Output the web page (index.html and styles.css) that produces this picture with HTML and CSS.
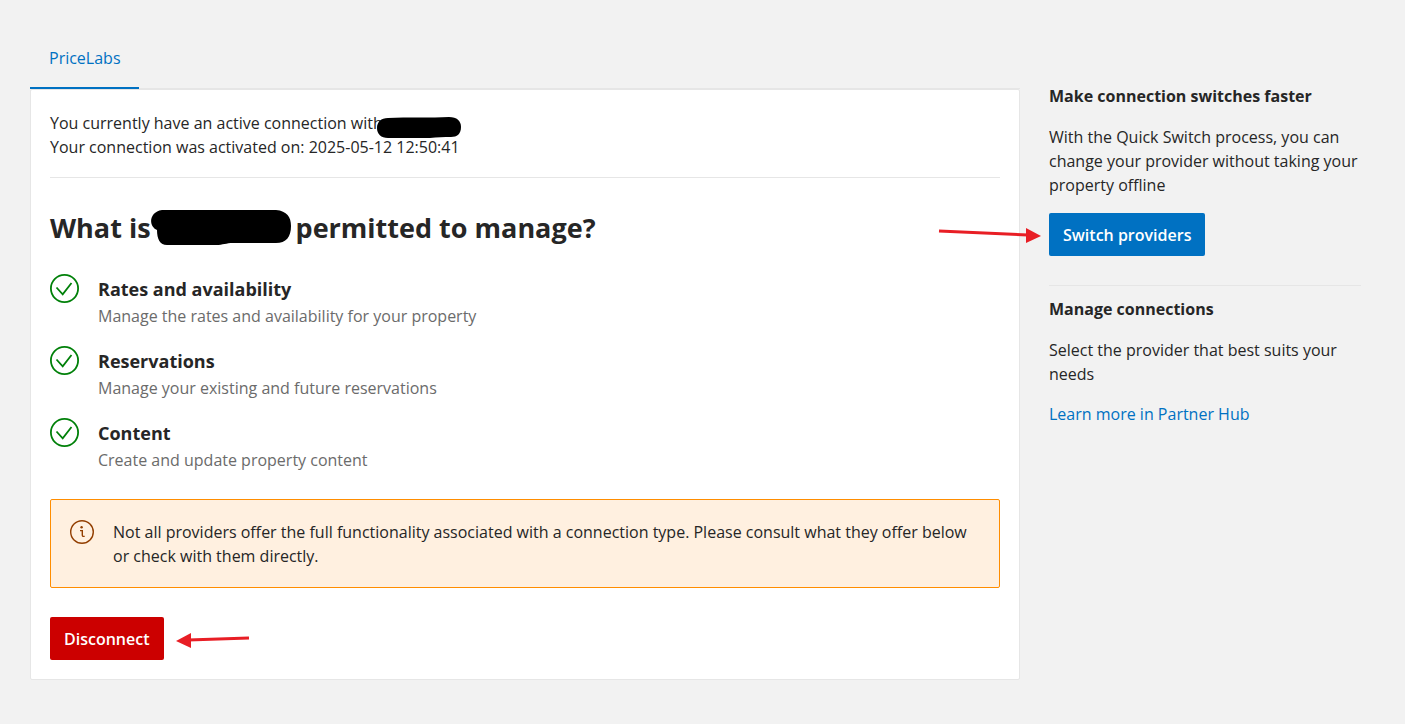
FILE: index.html
```html
<!DOCTYPE html>
<html lang="en">
<head>
<meta charset="utf-8">
<title>Connectivity provider</title>
<link rel="stylesheet" href="styles.css">
</head>
<body>
<div class="page">
  <main class="main">
    <nav class="tabs"><a class="tab" href="#">PriceLabs</a></nav>
    <section class="card">
      <div class="status">
        <p>You currently have an active connection with <svg class="redact-small" viewBox="0 0 84 22" aria-hidden="true"><path d="M11 1C30 0 55 1 72 0C80 0 84 4 84 10C84 17 80 20 74 20C67 20 60 20 53 21L11 21C4 21 0 17 0 11C0 5 4 1 11 1Z"/></svg></p>
        <p>Your connection was activated on: 2025-05-12 12:50:41</p>
      </div>
      <h1 class="title">What is <svg class="redact-large" viewBox="0 0 141 36" aria-hidden="true"><path d="M11 0H125C136 1 140 7 140 16C140 27 135 33 125 33H82C75 33 72 35 65 35H16C9 35 6 29 6 20C-3 16-2 2 11 0Z"/></svg> permitted to manage?</h1>
      <ul class="permissions">
        <li class="permission"><svg class="check" viewBox="0 0 29 29" aria-hidden="true"><circle cx="14.5" cy="14.5" r="13.6"/><path d="M6.5 13.5l6.2 6.8L21.5 9"/></svg><div><h2>Rates and availability</h2><p>Manage the rates and availability for your property</p></div></li>
        <li class="permission"><svg class="check" viewBox="0 0 29 29" aria-hidden="true"><circle cx="14.5" cy="14.5" r="13.6"/><path d="M6.5 13.5l6.2 6.8L21.5 9"/></svg><div><h2>Reservations</h2><p>Manage your existing and future reservations</p></div></li>
        <li class="permission"><svg class="check" viewBox="0 0 29 29" aria-hidden="true"><circle cx="14.5" cy="14.5" r="13.6"/><path d="M6.5 13.5l6.2 6.8L21.5 9"/></svg><div><h2>Content</h2><p>Create and update property content</p></div></li>
      </ul>
      <div class="notice">
        <svg class="info" viewBox="0 0 24 24" aria-hidden="true"><circle cx="12" cy="12" r="11.3"/><path d="M10 10.6h2.3v4.6q0 1.2 1.2 1.2h1.2"/><circle class="dot" cx="11.6" cy="7.2" r="1.2"/></svg>
        <p>Not all providers offer the full functionality associated with a connection type. Please consult what they offer below or check with them directly.</p>
      </div>
      <div class="actions">
        <button class="button danger" type="button">Disconnect</button>
        <svg class="arrow-left" viewBox="0 0 74 18" aria-hidden="true"><path class="shaft" d="M73 8L12 10"/><path class="head" d="M0 11L15 3V18Z"/></svg>
      </div>
    </section>
  </main>
  <aside class="side">
    <section class="block">
      <h2>Make connection switches faster</h2>
      <p>With the Quick Switch process, you can change your provider without taking your property offline</p>
      <div class="switch"><button class="button primary" type="button">Switch providers</button>
        <svg class="arrow-right" viewBox="0 0 104 16" aria-hidden="true"><path class="shaft" d="M1 3L90 7"/><path class="head" d="M103 8L88 0V15Z"/></svg></div>
    </section>
    <section class="block">
      <h2>Manage connections</h2>
      <p>Select the provider that best suits your needs</p>
      <a href="#">Learn more in Partner Hub</a>
    </section>
  </aside>
</div>
</body>
</html>
```

FILE: styles.css
```css
* { box-sizing: border-box; }
body { margin: 0; background: #f2f2f2; color: #262626; font: 16px/24px "Open Sans", "Noto Sans", sans-serif; }
h1, h2, p, ul { margin: 0; padding: 0; }
a { color: #0071c2; text-decoration: none; }
.page { display: flex; gap: 29px; padding: 28px 44px 44px 30px; }
.main { flex: 1; min-width: 0; }
.tabs { display: flex; box-shadow: inset 0 -1px #e6e6e6; }
.tab { padding: 18px 18px 17px 19px; border-bottom: 2px solid #0071c2; }
.card { padding: 21px 19px 19px; background: #fff; border: 1px solid #e6e6e6; border-radius: 2px; }
.status { padding-bottom: 18px; border-bottom: 1px solid #e6e6e6; }
.status p { position: relative; }
.redact-small { position: absolute; top: 6px; width: 84px; height: 22px; margin-left: -6px; }
.title { display: flex; align-items: center; margin-top: 32px; font-size: 27px; line-height: 36px; white-space: nowrap; }
.redact-large { width: 141px; height: 36px; margin-right: 4px; }
.permissions { display: grid; gap: 18px; margin-top: 28px; list-style: none; }
.permission { display: flex; gap: 19px; }
.permission h2 { font-size: 18px; line-height: 30px; }
.permission p { line-height: 24px; color: #6b6b6b; }
.check { flex: none; width: 29px; height: 29px; fill: none; stroke: #008009; stroke-width: 1.8; }
.notice { display: flex; gap: 19px; margin-top: 27px; padding: 20px 19px 19px; background: #fff0e0; border: 1px solid #ff8d00; border-radius: 2px; }
.info { flex: none; width: 24px; height: 24px; fill: none; stroke: #923e01; stroke-width: 1.4; }
.info .dot { fill: #923e01; stroke: none; }
.actions { display: flex; align-items: center; gap: 12px; margin-top: 29px; }
.button { height: 43px; padding: 0 14px; border: 0; border-radius: 2px; color: #fff; font: 600 16px/24px "Open Sans", "Noto Sans", sans-serif; }
.danger { background: #c00; }
.primary { background: #0071c2; }
.arrow-left { width: 74px; height: 18px; }
.shaft { fill: none; stroke: #e81e25; stroke-width: 3; }
.head { fill: #e81e25; }
.side { flex: 0 0 312px; padding-top: 56px; }
.block h2 { font-size: 16px; line-height: 24px; }
.block p { margin: 17px 0 16px; }
.block + .block { margin-top: 29px; padding-top: 11px; border-top: 1px solid #e6e6e6; }
.switch { position: relative; }
.arrow-right { position: absolute; left: -111px; top: 15px; width: 104px; height: 16px; }
```
